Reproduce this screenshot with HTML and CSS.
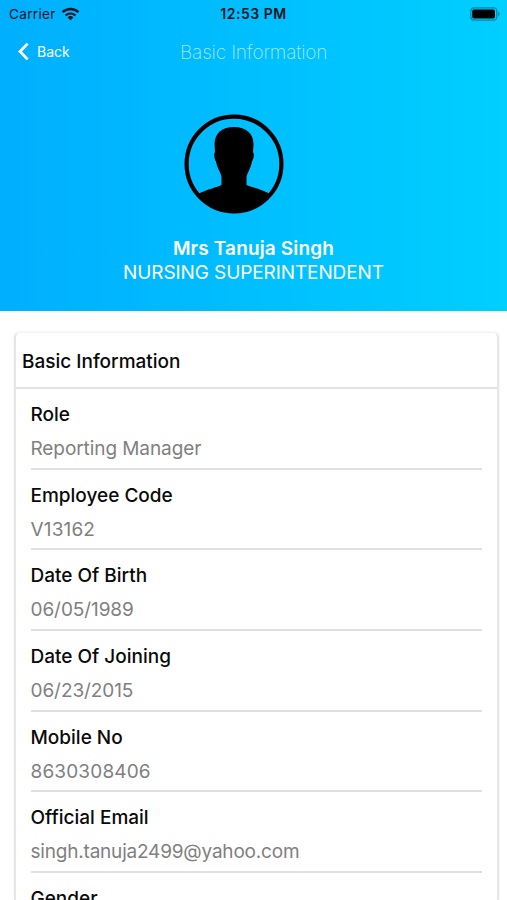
FILE: index.html
```
<!DOCTYPE html>
<html lang="en">
<head>
  <meta charset="UTF-8" />
  <meta name="viewport" content="width=device-width, initial-scale=1.0"/>
  <title>Basic Information</title>
  <link rel="stylesheet" href="styles.css">
</head>
<body>
  <header class="hero">
    <div class="status-bar">
      <div class="carrier">
        <span>Carrier</span>
        <svg class="wifi" viewBox="0 0 18 14" width="19" height="14">
          <path d="M1 5.2a11.6 11.6 0 0 1 16 0" fill="none" stroke="#06151d" stroke-width="2.3"/>
          <path d="M4 8.5a7.2 7.2 0 0 1 10 0" fill="none" stroke="#06151d" stroke-width="2.1"/>
          <path d="M9 13.3 6.1 10.5a4.2 4.2 0 0 1 5.8 0z" fill="#06151d"/>
        </svg>
      </div>
      <div class="time">12:53 PM</div>
      <svg class="battery" viewBox="0 0 31 14" width="31" height="14">
        <rect x="0.8" y="0.8" width="26" height="12.4" rx="3.4" fill="none" stroke="#0581a4" stroke-width="1.2"/>
        <rect x="2.2" y="2.4" width="22.8" height="9.2" rx="1.8" fill="#000"/>
        <path d="M28.2 4.8c1.8.6 1.8 3.8 0 4.400z" fill="#0581a4"/>
      </svg>
    </div>

    <nav class="nav">
      <a class="back" href="#">
        <svg viewBox="0 0 12 19" width="12" height="19">
          <path d="M9.6 1.6 2 9.5l7.600 7.900" fill="none" stroke="#fff" stroke-width="2.8"/>
        </svg>
        <span>Back</span>
      </a>
      <h1 class="title">Basic Information</h1>
    </nav>

    <svg class="avatar" viewBox="0 0 100 100" width="100" height="100">
      <circle cx="50" cy="50" r="47.4" fill="none" stroke="#000" stroke-width="4.2"/>
      <path d="M50 13C37 13 30.500 20 30.600 30.500L31 38.500C29.600 39 30.200 45 32 47.500C33 54 36.800 58.500 37.500 63V71C34 73 22 75.500 13 80.500A48.500 48.500 0 0 0 87 80.500C78 75.500 67 73 62.500 71V63C63.500 58.500 67 54 68 47.500C69.900 45 70.400 39 69 38.500L69.500 30.500C69.800 20 62.500 13 50 13Z" fill="#000"/>
    </svg>

    <div class="name">Mrs Tanuja Singh</div>
    <div class="designation">NURSING SUPERINTENDENT</div>
  </header>

  <main class="card">
    <h2 class="card-title">Basic Information</h2>
    <div class="fields">
      <div class="field">
        <div class="label">Role</div>
        <div class="value">Reporting Manager</div>
      </div>
      <div class="field">
        <div class="label">Employee Code</div>
        <div class="value code">V13162</div>
      </div>
      <div class="field">
        <div class="label">Date Of Birth</div>
        <div class="value">06/05/1989</div>
      </div>
      <div class="field">
        <div class="label">Date Of Joining</div>
        <div class="value">06/23/2015</div>
      </div>
      <div class="field">
        <div class="label">Mobile No</div>
        <div class="value code">8630308406</div>
      </div>
      <div class="field">
        <div class="label">Official Email</div>
        <div class="value email">singh.tanuja2499@yahoo.com</div>
      </div>
      <div class="field">
        <div class="label">Gender</div>
      </div>
    </div>
  </main>
</body>
</html>
```
FILE: styles.css
```
* {
  box-sizing: border-box;
}
body {
  margin: 0;
  height: 900px;
  overflow: hidden;
  background: #fff;
  font-family: Inter, "Liberation Sans", sans-serif;
  color: #0a0a0a;
}
.hero {
  height: 311px;
  background: linear-gradient(90deg, #00afff, #00cfff);
  color: #fff;
  display: flex;
  flex-direction: column;
  align-items: center;
}
.status-bar {
  width: 100%;
  height: 27px;
  padding: 0 6px 0 9px;
  display: grid;
  grid-template-columns: 1fr auto 1fr;
  align-items: center;
  color: #06151d;
}
.carrier {
  display: flex;
  align-items: center;
  gap: 5px;
  font-size: 13.5px;
  letter-spacing: 0.35px;
}
.time {
  margin-right: 3px;
  font-size: 14px;
  letter-spacing: 0.5px;
  font-weight: 600;
}
.battery {
  justify-self: end;
}
.nav {
  width: 100%;
  height: 50px;
  padding-left: 18px;
  display: grid;
  grid-template-columns: 162px auto;
  align-items: center;
}
.back {
  display: flex;
  align-items: center;
  gap: 7px;
  padding-bottom: 1px;
  color: #fff;
  font-size: 14px;
  text-decoration: none;
}
.title {
  margin: 0;
  font-size: 19px;
  letter-spacing: -0.15px;
  font-weight: 200;
  color: rgba(255, 255, 255, 0.65);
}
.avatar {
  margin: 37px 40px 0 0;
}
.name {
  margin-top: 23px;
  font-size: 19px;
  letter-spacing: 0.15px;
  line-height: 24px;
  font-weight: 600;
}
.designation {
  font-size: 19px;
  letter-spacing: -0.1px;
  line-height: 24px;
}
.card {
  margin: 22px 8px 0 14px;
  height: 567px;
  overflow: hidden;
  border: solid #e6e6e6;
  border-width: 0 2px;
  border-radius: 5px 5px 0 0;
  background: #fff;
  box-shadow: 0 -1px 3px rgba(0, 0, 0, 0.08);
}
.card-title {
  margin: 0;
  height: 56px;
  padding-left: 6px;
  border-bottom: 2px solid #e2e2e2;
  font-size: 19px;
  line-height: 57px;
  font-weight: 500;
}
.fields {
  padding: 0 15px 0 14.5px;
}
.field {
  height: 80.7px;
  padding-top: 9px;
  border-bottom: 2px solid #e0e0e0;
}
.label {
  font-size: 19px;
  line-height: 34px;
  font-weight: 500;
}
.value {
  font-size: 19px;
  line-height: 34px;
  letter-spacing: -0.08px;
  color: #808080;
}
.code {
  letter-spacing: 0.15px;
}
.email {
  letter-spacing: -0.2px;
}
```
